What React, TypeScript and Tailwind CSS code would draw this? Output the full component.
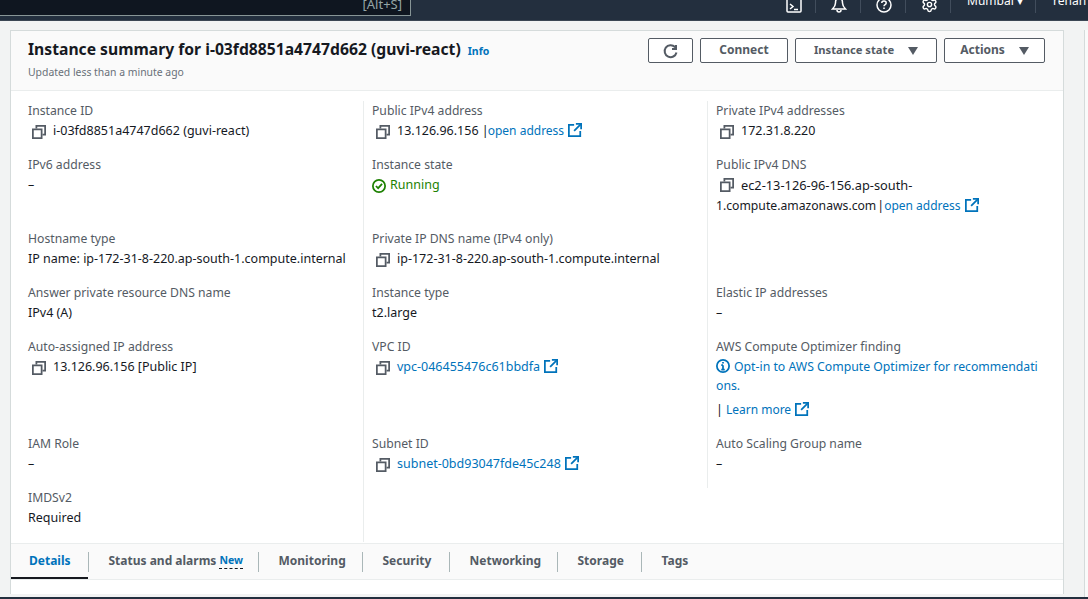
import type { ReactNode } from 'react';
import { Settings } from 'lucide-react';

const COPY_ICON = (
  <svg width="14" height="14" viewBox="0 0 16 16" fill="none" stroke="#545b64" strokeWidth="2" className="shrink-0">
    <rect x="1" y="5" width="10" height="10" />
    <path d="M5 4V1h10v10h-3" />
  </svg>
);

function ExternalIcon() {
  return (
    <svg width="14" height="14" viewBox="0 0 16 16" fill="none" stroke="#0073bb" strokeWidth="2" className="ml-[4px] inline-block shrink-0 align-[-2px]">
      <path d="M7 2H1v13h13V9" />
      <path d="M9 1h6v6" />
      <path d="M15 1 7 9" />
    </svg>
  );
}

function Copyable({ children }: { children: ReactNode }) {
  return (
    <div className="flex pl-[4px]">
      <span className="mr-[7px] mt-[4px]">{COPY_ICON}</span>
      <span>{children}</span>
    </div>
  );
}

function Link({ children }: { children: ReactNode }) {
  return <span className="text-[12px] text-[#0073bb]">{children}</span>;
}

function Cell({ label, children, last }: { label: string; children: ReactNode; last?: boolean }) {
  return (
    <div className={`border-r border-[#eaeded] pl-2 pb-[14px] ${last ? 'border-r-0' : ''}`}>
      <div className="text-[12.2px] text-[#545b64]">{label}</div>
      <div className="text-[#16191f]">{children}</div>
    </div>
  );
}

function Button({ children, className }: { children: ReactNode; className: string }) {
  return (
    <button className={`flex h-[25px] items-center justify-center rounded-[2px] border border-[#545b64] bg-white pb-[2px] text-[12px] font-bold text-[#545b64] ${className}`}>
      {children}
    </button>
  );
}

function Caret() {
  return (
    <svg width="10" height="8" viewBox="0 0 10 8" className="mt-[2px] ml-[14px]">
      <path d="M0 0h10L5 8z" fill="#545b64" />
    </svg>
  );
}

function NavIcon({ children }: { children: ReactNode }) {
  return <div className="flex w-[45px] items-end justify-center border-r border-[#414d5c] pl-[2px]">{children}</div>;
}

const TABS = [
  { name: 'Status and alarms', badge: true, width: 'w-[170px]' },
  { name: 'Monitoring', width: 'w-[104px]' },
  { name: 'Security', width: 'w-[87px]' },
  { name: 'Networking', width: 'w-[108px]' },
  { name: 'Storage', width: 'w-[84px]' },
];

export default function App() {
  return (
    <div className="relative flex h-[599px] w-[1088px] flex-col overflow-hidden bg-[#f2f3f3] font-['Noto_Sans',sans-serif] text-[12.5px] leading-[20px]">
      <header className="flex h-[21px] shrink-0 justify-between overflow-hidden border-b border-[#3b4654] bg-[#232f3e]">
        <div className="relative h-[16px] w-[411px] border-r border-b border-[#879596] bg-[#0f1620]">
          <span className="absolute right-[8px] bottom-[4px] text-[13px] leading-[14px] text-[#95a5a6]">[Alt+S]</span>
        </div>
        <div className="flex h-[13px] text-white">
          <NavIcon>
            <svg width="16" height="16" viewBox="0 0 16 16" fill="none" stroke="#fff" strokeWidth="1.500" className="shrink-0">
              <rect x="1" y="1" width="14" height="14" rx="1" />
              <path d="m4 7 3 2.500L4 12M8 12.500h4" />
            </svg>
          </NavIcon>
          <NavIcon>
            <svg width="16" height="16" viewBox="0 0 16 16" fill="none" stroke="#fff" strokeWidth="1.500" className="shrink-0">
              <path d="M8 1C5 1 4.500 4 4.500 6c0 3-1.500 4.500-3 6h13c-1.500-1.500-3-3-3-6 0-2-.5-5-3.500-5z" />
              <path d="M6 13c0 1.200 1 2 2 2s2-.8 2-2" />
            </svg>
          </NavIcon>
          <NavIcon>
            <svg width="16" height="16" viewBox="0 0 16 16" fill="none" stroke="#fff" strokeWidth="1.500" className="shrink-0">
              <circle cx="8" cy="8" r="7" />
              <path d="M5.800 6c0-1.300 1-2 2.200-2s2.200.8 2.200 2c0 1.600-2.200 1.600-2.200 3.200M8 10.500V12" />
            </svg>
          </NavIcon>
          <NavIcon>
            <Settings size={17} strokeWidth={2} className="shrink-0" />
          </NavIcon>
          <div className="relative flex w-[85px] items-end border-r border-[#414d5c] pl-[16px] text-[12px] leading-[12px]">
            <span className="absolute bottom-[6px] left-[16px] whitespace-nowrap">Mumbai ▾</span>
          </div>
          <div className="relative w-[52px] text-[12px] leading-[12px]">
            <span className="absolute bottom-[6px] left-[17px] whitespace-nowrap">renan k</span>
          </div>
        </div>
      </header>

      <div className="flex min-h-0 flex-1 pt-[9px] pl-[10px]">
        <main className="flex h-[564px] w-[1054px] flex-col border-x border-t border-[#d5dbdb] bg-white">
          <div className="flex h-[60px] shrink-0 justify-between border-b border-[#eaeded] bg-[#fafafa] pt-[7px] pr-[18px] pl-[17px]">
            <div>
              <h1 className="flex items-baseline text-[15.7px] leading-[22px] font-bold text-[#16191f]">
                Instance summary for i-03fd8851a4747d662 (guvi-react)
                <span className="ml-[7px] text-[10.5px] text-[#0073bb]">Info</span>
              </h1>
              <p className="mt-[1px] text-[10.4px] leading-[18px] text-[#687078]">Updated less than a minute ago</p>
            </div>
            <div className="flex gap-[7px]">
              <Button className="w-[45px]">
                <svg width="16" height="16" viewBox="0 0 16 16" fill="none" stroke="#545b64" strokeWidth="2" className="mt-[2px]">
                  <path d="M13 2v4H9" />
                  <path d="M13.500 9.500A6 6 0 1 1 12 4l1 1.500" />
                </svg>
              </Button>
              <Button className="w-[88px]">Connect</Button>
              <Button className="w-[142px]"><span className="text-[11.2px]">Instance state</span><Caret /></Button>
              <Button className="w-[101px]">Actions<Caret /></Button>
            </div>
          </div>

          <div className="grid flex-1 grid-cols-[344px_344px_1fr] content-start pt-[10px] pl-[9px]">
            <Cell label="Instance ID"><Copyable>i-03fd8851a4747d662 (guvi-react)</Copyable></Cell>
            <Cell label="Public IPv4 address">
              <Copyable>13.126.96.156 |<span className="-ml-[1px]"><Link>open address</Link></span><ExternalIcon /></Copyable>
            </Cell>
            <Cell label="Private IPv4 addresses" last><Copyable>172.31.8.220</Copyable></Cell>

            <Cell label="IPv6 address">–</Cell>
            <Cell label="Instance state">
              <div className="flex items-center text-[#1d8102]">
                <svg width="14" height="14" viewBox="0 0 16 16" fill="none" stroke="#1d8102" strokeWidth="2" className="mr-[4px] mt-[2px]">
                  <circle cx="8" cy="8" r="7" />
                  <path d="m4.500 8 2.500 2.500 4.500-5" />
                </svg>
                Running
              </div>
            </Cell>
            <Cell label="Public IPv4 DNS" last>
              <div className="h-[40px] w-[270px]">
                <svg width="14" height="14" viewBox="0 0 16 16" fill="none" stroke="#545b64" strokeWidth="2" className="mr-[7px] ml-[4px] inline-block align-[-2px]">
                  <rect x="1" y="5" width="10" height="10" />
                  <path d="M5 4V1h10v10h-3" />
                </svg>
                <span className="text-[12.8px]">ec2-13-126-96-156.ap-south-</span>
                <span className="text-[12.2px]">1.compute.amazonaws.com</span>
                <span className="ml-[1px]">|</span>
                <Link>open address</Link>
                <ExternalIcon />
              </div>
            </Cell>

            <Cell label="Hostname type">IP name: ip-172-31-8-220.ap-south-1.compute.internal</Cell>
            <Cell label="Private IP DNS name (IPv4 only)"><Copyable>ip-172-31-8-220.ap-south-1.compute.internal</Copyable></Cell>
            <div />

            <Cell label="Answer private resource DNS name">IPv4 (A)</Cell>
            <Cell label="Instance type">t2.large</Cell>
            <Cell label="Elastic IP addresses" last>–</Cell>

            <Cell label="Auto-assigned IP address"><Copyable>13.126.96.156 [Public IP]</Copyable></Cell>
            <Cell label="VPC ID"><Copyable><span className="text-[#0073bb]">vpc-046455476c61bbdfa</span><ExternalIcon /></Copyable></Cell>
            <Cell label="AWS Compute Optimizer finding" last>
              <div className="w-[326px] text-[12.25px] leading-[19px] break-all text-[#0073bb]">
                <svg width="14" height="14" viewBox="0 0 16 16" fill="none" stroke="#0073bb" strokeWidth="2" className="mr-[4px] inline-block align-[-2px]">
                  <circle cx="8" cy="8" r="7" />
                  <path d="M8 7v5M6 12h4M6 7h2M8 3.500v1.500" />
                </svg>
                Opt-in to AWS Compute Optimizer for recommendations.
              </div>
              <div className="mt-[5px]">|<span className="ml-[3px]"><Link>Learn more</Link></span><ExternalIcon /></div>
            </Cell>

            <Cell label="IAM Role">–</Cell>
            <Cell label="Subnet ID"><Copyable><span className="text-[#0073bb]">subnet-0bd93047fde45c248</span><ExternalIcon /></Copyable></Cell>
            <Cell label="Auto Scaling Group name" last>–</Cell>

            <Cell label="IMDSv2">Required</Cell>
          </div>

          <nav className="flex h-[37px] shrink-0 items-center border-y border-[#eaeded] bg-[#fafafa] text-[12px] font-bold text-[#545b64]">
            <div className="relative flex h-[20px] w-[78px] items-center border-r border-[#aab7b8] pb-[2px] pl-[18px] text-[#0073bb]">
              Details
              <span className="absolute top-[25px] left-0 h-[2px] w-[77px] bg-[#16191f]" />
            </div>
            {TABS.map((tab) => (
              <div key={tab.name} className={`flex h-[20px] items-center border-r border-[#aab7b8] pb-[2px] pl-[19.500px] whitespace-nowrap ${tab.width}`}>
                {tab.name}
                {tab.badge && <span className="ml-[3px] border-b border-dashed border-[#16191f] text-[10.5px] leading-[15px] text-[#0073bb]">New</span>}
              </div>
            ))}
            <div className="pb-[2px] pl-[19.500px]">Tags</div>
          </nav>
          <div className="h-[14px] shrink-0 bg-white" />
        </main>
        <div className="ml-[20px] h-[576px] w-[4px] border-l border-[#d5dbdb] bg-[#fafafa]" />
      </div>
      <div className="absolute right-0 bottom-0 left-0 h-[2px] bg-[#232f3e]" />
    </div>
  );
}
